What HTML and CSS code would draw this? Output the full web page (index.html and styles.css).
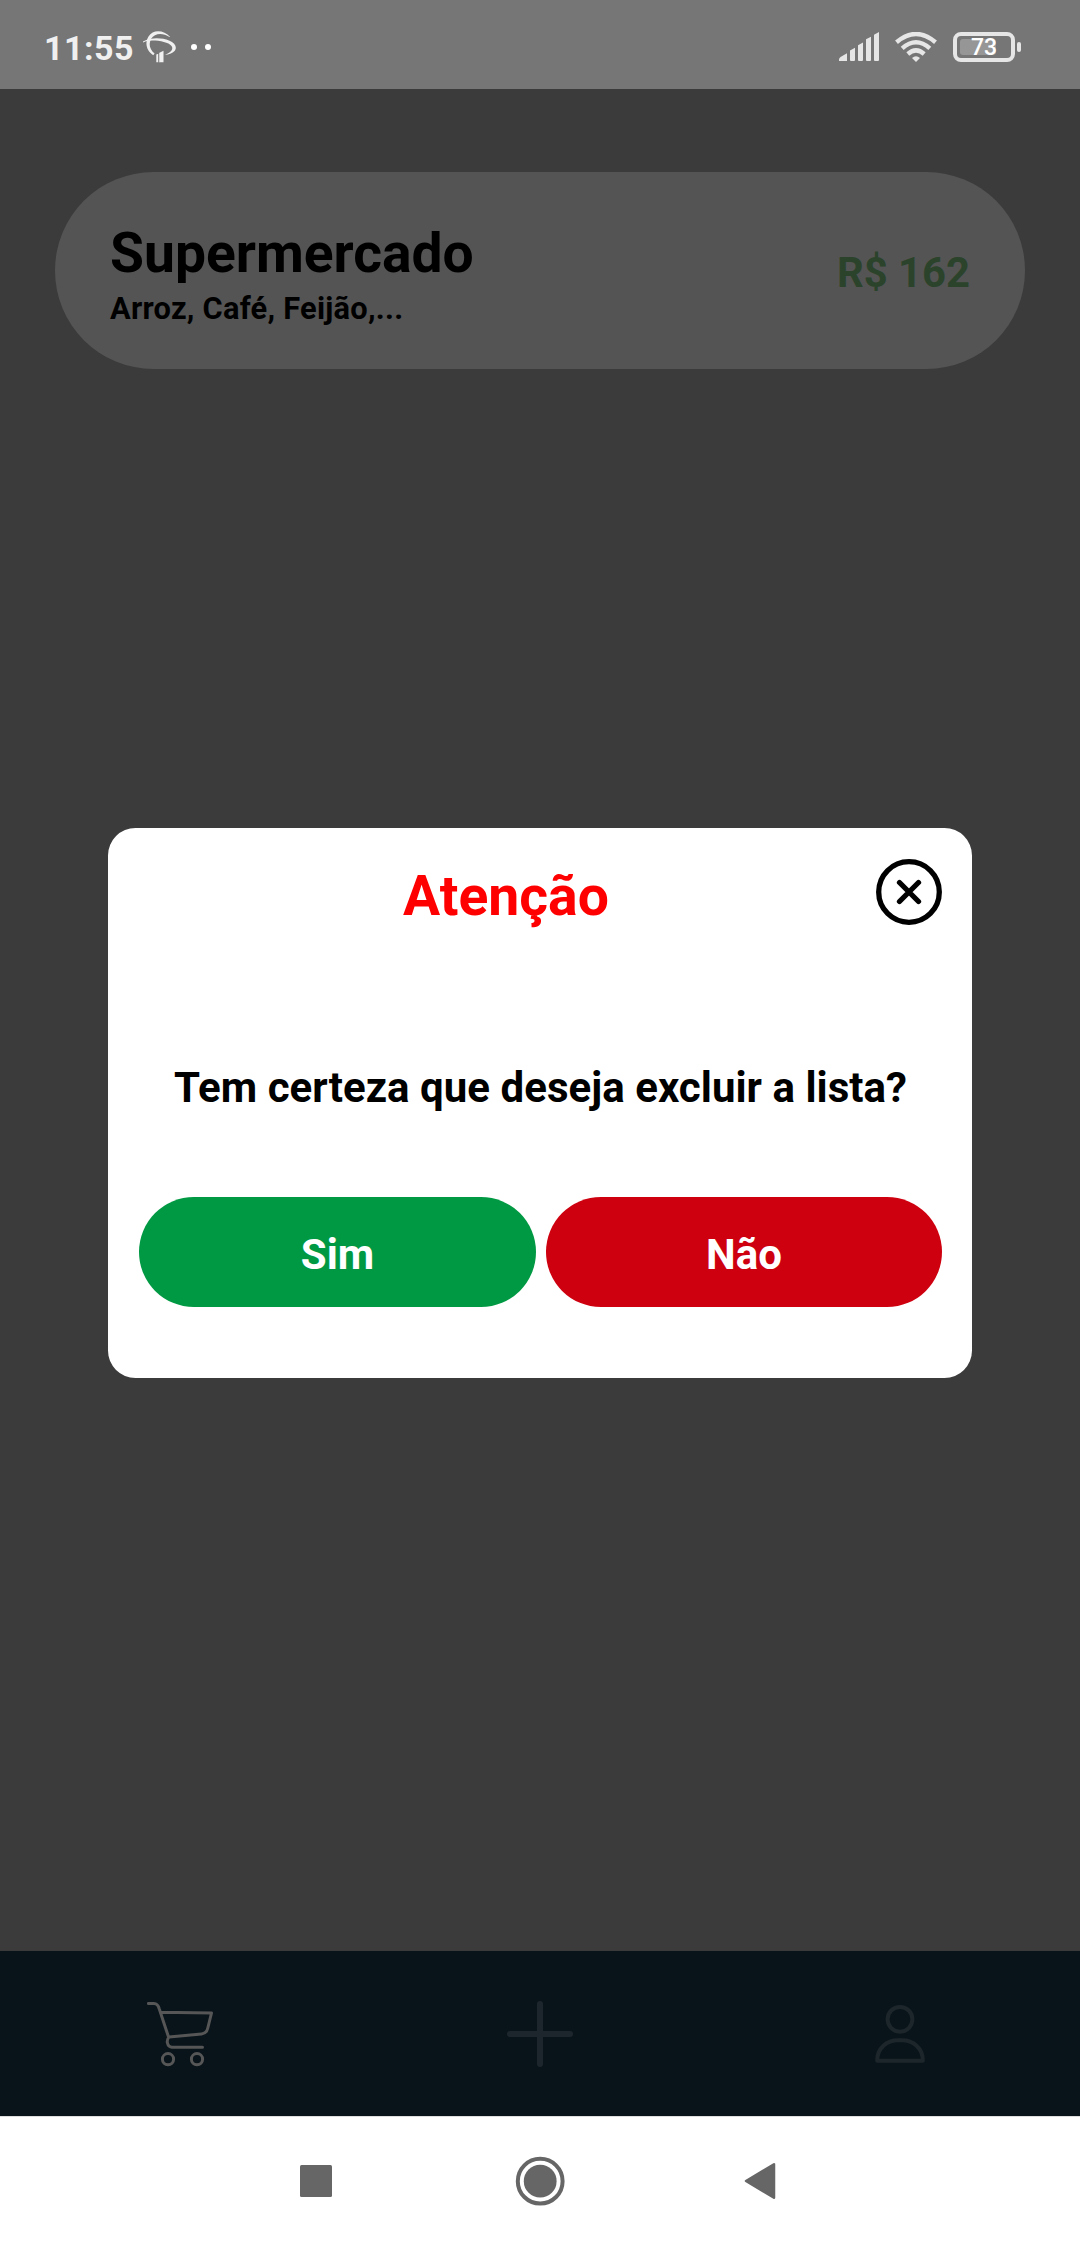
FILE: index.html
```html
<!DOCTYPE html>
<html lang="pt-BR">
<head>
<meta charset="utf-8">
<title>Listas de compras</title>
<link rel="stylesheet" href="styles.css">
</head>
<body>
<div class="screen">
  <header class="status-bar">
    <div class="status-left">
      <span class="clock">11:55</span>
      <svg class="tree-icon" width="34" height="33" viewBox="0 0 34 33" fill="#f0f0f0">
        <path d="M0 10.500C8 6 19 6.500 26 9.500C33 12.500 34.500 17 31 20.500C29 22.500 26 23.600 22 24C27 21.500 31 18.500 28.500 15C25 10.500 11 8.500 3 10.200L0 11.500Z"/>
        <path d="M27.200 6C21-1 10-2 5.500 5.500C1.500 12 3.500 20 10.200 24.300L11.600 22.500C6.500 18.500 5.500 13 8 8C12 1.500 20 1.800 26.500 6Z"/>
        <path d="M13.300 23.500l2-.8v8.600h-2zM16 22l4.500-2.200v11.500H16z"/>
        <path d="M16 22v9" stroke="#767676" stroke-width=".5"/>
      </svg>
      <span class="dot"></span><span class="dot"></span>
    </div>
    <div class="status-right">
      <svg width="41" height="30" viewBox="0 0 41 30" fill="#e6e6e6">
        <path d="M0 27.500Q0 26 1.500 25L8 21.200V29H0zM11 18.500L16 15.800V28Q16 29 15 29H12Q11 29 11 28zM19 13.200L24 10.500V28Q24 29 23 29H20Q19 29 19 28zM27 7.200L32 4.700V28Q32 29 31 29H28Q27 29 27 28zM35 2.700L40 0V28Q40 29 39 29H36Q35 29 35 28z"/>
      </svg>
      <svg class="wifi-icon" width="42" height="30" viewBox="0 0 42 30" fill="none" stroke="#e6e6e6" stroke-width="4.400">
        <path d="M1.500 10.300Q21-6.300 40.500 10.300"/>
        <path d="M7.200 16.400Q21 4.200 34.800 16.400"/>
        <path d="M12.800 22Q21 14.800 29.200 22"/>
        <path d="M17 26Q21 22.500 25 26L21 30z" fill="#e6e6e6" stroke="none"/>
      </svg>
      <div class="battery"><div class="battery-body"><i class="battery-level"></i><span class="battery-text">73</span></div><i class="battery-tip"></i></div>
    </div>
  </header>

  <main class="content">
    <article class="card">
      <div class="card-text">
        <h2 class="card-title">Supermercado</h2>
        <p class="card-items">Arroz, Café, Feijão,...</p>
      </div>
      <span class="card-price">R$ 162</span>
    </article>
  </main>

  <nav class="tab-bar">
    <div class="tab">
      <svg width="66" height="66" viewBox="0 0 66 66" fill="none" stroke="#565656" stroke-width="3" stroke-linecap="round" stroke-linejoin="round">
        <path d="M1.400 2.500H7C10 2.500 11.500 5 12.300 8L21.700 36.500M13.500 11.200L64.500 12L60.800 27C60 31 58 32.600 54.500 33L22 36C19 39 20 46.200 25 46.200H55.500"/>
        <circle cx="21" cy="58.200" r="5.600"/><circle cx="50" cy="58.200" r="5.600"/>
      </svg>
    </div>
    <div class="tab">
      <svg width="66" height="66" viewBox="0 0 66 66" fill="none" stroke="#1e262d" stroke-width="6" stroke-linecap="round"><path d="M33 3V63M3 33H63"/></svg>
    </div>
    <div class="tab">
      <svg width="66" height="66" viewBox="0 0 66 66" fill="none" stroke="#1c262b" stroke-width="4" stroke-linejoin="round"><circle cx="33" cy="18.300" r="12.400"/><path d="M10.200 59.800C10 47 20 39.300 31 39.300H35C46 39.300 56 47 55.800 59.800Z"/></svg>
    </div>
  </nav>

  <footer class="system-nav">
    <svg width="32" height="32" viewBox="0 0 32 32"><rect width="32" height="32" rx="1.500" fill="#666"/></svg>
    <svg class="home-icon" width="50" height="50" viewBox="0 0 50 50"><circle cx="25.200" cy="25.200" r="22.400" fill="none" stroke="#666" stroke-width="4"/><circle cx="25.200" cy="25.200" r="16.400" fill="#666"/></svg>
    <svg width="32" height="38" viewBox="0 0 32 38"><path d="M2 19L30 2.200V35.800Z" fill="#666" stroke="#666" stroke-width="2.500" stroke-linejoin="round"/></svg>
  </footer>

  <section class="dialog" role="dialog">
    <div class="dialog-head">
      <h1 class="dialog-title">Atenção</h1>
      <svg width="66" height="66" viewBox="0 0 66 66" fill="none" stroke="#000" stroke-width="5.300"><circle cx="33" cy="33" r="30.300"/><path d="M23.500 23.500L42.500 42.500M42.500 23.500L23.500 42.500" stroke-linecap="round"/></svg>
    </div>
    <p class="dialog-message">Tem certeza que deseja excluir a lista?</p>
    <div class="dialog-actions">
      <button class="button button-yes">Sim</button>
      <button class="button button-no">Não</button>
    </div>
  </section>
</div>
</body>
</html>
```
FILE: styles.css
```css
* { box-sizing: border-box; margin: 0; padding: 0; }
body { font-family: Roboto, "Liberation Sans", sans-serif; font-weight: 700; color: #000; }
svg { display: block; flex: none; }

.screen { position: relative; display: flex; flex-direction: column; width: 1080px; height: 2246px; background: #3b3b3b; overflow: hidden; }

.status-bar { display: flex; justify-content: space-between; height: 89px; padding: 0 59px 0 44px; background: #767676; color: #f0f0f0; }
.status-left, .status-right { display: flex; align-items: center; height: 94px; }
.clock { font-size: 34px; line-height: 40px; width: 99px; padding-top: 2px; letter-spacing: .5px; }
.tree-icon { margin-right: 14px; }
.dot { width: 6px; height: 6px; border-radius: 50%; background: #fff; margin-right: 8px; }
.wifi-icon { margin: 0 16px 0 15px; }
.battery { display: flex; align-items: center; gap: 2px; }
.battery-body { position: relative; display: flex; align-items: center; justify-content: center; width: 62px; height: 30px; border: 4px solid #e6e6e6; border-radius: 8px; }
.battery-level { position: absolute; left: 3px; top: 3px; width: 36px; height: 16px; border-radius: 3px; background: #969696; }
.battery-text { position: relative; padding-top: 2px; font-size: 23px; line-height: 24px; font-weight: 500; color: #fff; }
.battery-tip { width: 4px; height: 10px; border-radius: 2px; background: #e6e6e6; }

.content { flex: 1; padding: 83px 55px 0; }
.card { display: flex; align-items: center; justify-content: space-between; height: 197px; padding: 4px 55px 0; border-radius: 98.500px; background: #545454; }
.card-text { padding-top: 3px; }
.card-title { font-size: 55.200px; line-height: 64px; }
.card-items { margin-top: 6px; font-size: 30.800px; line-height: 36px; letter-spacing: .25px; }
.card-price { font-size: 41.800px; line-height: 48px; color: #2b432b; }

.tab-bar { display: flex; height: 165px; background: #08141a; }
.tab { flex: 1; display: flex; align-items: center; justify-content: center; }

.system-nav { display: flex; align-items: center; justify-content: space-between; height: 130px; padding: 0 304px 2px 300px; border-top: 1px solid #dedede; background: #fff; }
.home-icon { margin-left: 4px; }

.dialog { position: absolute; left: 108px; top: 828px; width: 864px; height: 550px; padding: 31px 30px 0 31px; border-radius: 27.500px; background: #fff; }
.dialog-head { display: flex; height: 74px; }
.dialog-title { flex: 1; padding-right: 3px; font-size: 55.300px; line-height: 76px; text-align: center; color: #f00; }
.dialog-message { margin-top: 131px; font-size: 42px; line-height: 48px; text-align: center; white-space: nowrap; letter-spacing: .03px; }
.dialog-actions { display: grid; grid-template-columns: 397px 396px; gap: 10px; margin-top: 85px; }
.button { height: 110px; padding-top: 6px; border: 0; border-radius: 55px; font: inherit; font-size: 42px; line-height: 48px; color: #fff; }
.button-yes { background: #009943; }
.button-no { background: #ce000f; }
```
